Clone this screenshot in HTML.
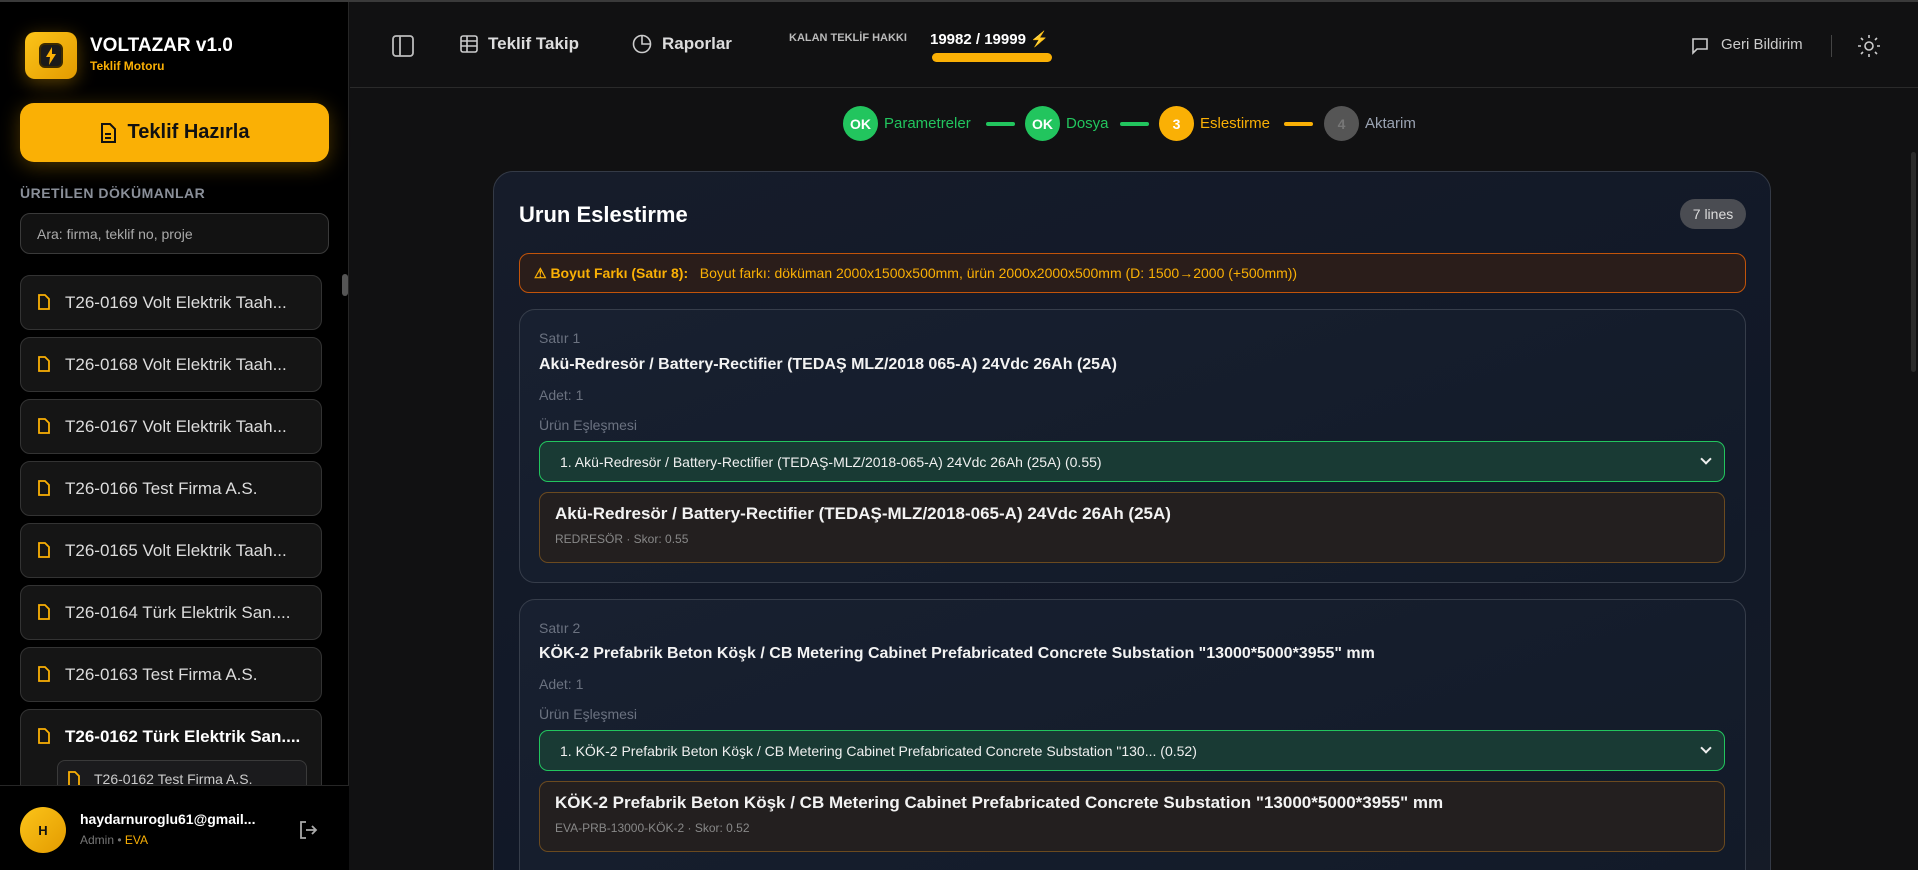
<!DOCTYPE html>
<html><head><meta charset="utf-8"><style>
*{box-sizing:border-box;margin:0;padding:0}
html,body{width:1918px;height:870px;overflow:hidden}
body{background:#111112;font-family:"Liberation Sans",sans-serif;color:#eee}
#w{position:relative;width:1918px;height:870px;overflow:hidden;border-top:2px solid #3a3a3a}
.sb{position:absolute;left:0;top:0;width:349px;height:870px;background:#000;border-right:1px solid #262626}
.logo{position:absolute;left:25px;top:30px;width:52px;height:47px;border-radius:10px;background:linear-gradient(135deg,#fcc419,#e39b00);box-shadow:0 4px 18px rgba(250,176,5,.35)}
.logo i{position:absolute;left:14px;top:11px;width:24px;height:25px;border-radius:6px;background:#1a1a1a;border:2px solid #3b2a00}
.btn{position:absolute;left:20px;top:101px;width:309px;height:59px;border-radius:14px;background:#fab005;box-shadow:0 4px 20px rgba(250,176,5,.3);color:#111;font-weight:bold;font-size:20px;display:flex;align-items:center;justify-content:center;gap:12px}
.lbl{position:absolute;left:20px;top:183px;font-size:14px;font-weight:bold;color:#8a8f99;letter-spacing:.5px}
.search{position:absolute;left:20px;top:211px;width:309px;height:41px;border:1px solid #3a3a3a;border-radius:10px;background:#121212;font-size:14px;color:#aaa;padding:12px 16px}
.it{position:absolute;left:20px;width:302px;height:55px;border:1px solid #333;border-radius:10px;background:#151515;font-size:17px;color:#ddd;padding:17px 0 0 44px;white-space:nowrap;overflow:hidden}
.it svg{position:absolute;left:17px;top:18px}
.user{position:absolute;left:0;top:783px;width:349px;height:87px;background:#000;border-top:1px solid #262626}
.main{position:absolute;left:350px;top:0;right:0;height:86px;border-bottom:1px solid #2a2a2a}
.nav{position:absolute;top:32px;font-size:17px;font-weight:bold;color:#ddd;display:flex;align-items:center;gap:10px}
.step{position:absolute;top:104px;height:35px;display:flex;align-items:center;font-size:15px}
.c{width:35px;height:35px;border-radius:50%;display:flex;align-items:center;justify-content:center;font-weight:bold;font-size:14px;color:#fff;margin-right:6px}
.ln{position:absolute;top:120px;width:29px;height:4px;border-radius:2px}
.card{position:absolute;left:493px;top:169px;width:1278px;height:720px;border:1px solid #343a46;border-radius:20px;background:linear-gradient(160deg,#161c2a,#111827 60%,#151b27)}
.row{position:absolute;left:25px;width:1227px;border:1px solid #363d4a;border-radius:16px;background:linear-gradient(160deg,#182030,#121a28)}
.row .s{position:absolute;left:19px;font-size:14px;color:#6b7280}
.row .t{position:absolute;left:19px;font-size:16px;font-weight:bold;color:#f3f3f3;white-space:nowrap}
.sel{position:absolute;left:19px;width:1186px;height:41px;border:1px solid #22c55e;border-radius:9px;background:#193a34;font-size:14px;color:#f0f0f0;padding:12px 20px}
.sel:after{content:"";position:absolute;right:14px;top:13px;width:6px;height:6px;border-right:2px solid #eee;border-bottom:2px solid #eee;transform:rotate(45deg)}
.pr{position:absolute;left:19px;width:1186px;height:71px;border:1px solid #6b4a1f;border-radius:9px;background:#231f1f;padding:11px 15px}
.pr b{display:block;font-size:17px;color:#f3f3f3}
.pr span{display:block;font-size:12px;color:#888;margin-top:8px}
</style></head><body><div id="w">
<div class="sb">
 <div class="logo"><i></i><svg style="position:absolute;left:20px;top:15px" width="12" height="18" viewBox="0 0 12 18"><path d="M7 0L1 10h4l-1 8 7-11H7z" fill="#fab005"/></svg></div>
 <div style="position:absolute;left:90px;top:33px;font-size:19px;font-weight:bold;color:#fff">VOLTAZAR v1.0</div>
 <div style="position:absolute;left:90px;top:57px;font-size:12px;font-weight:bold;color:#fab005">Teklif Motoru</div>
 <div class="btn"><svg width="16" height="20" viewBox="0 0 16 20" fill="none" stroke="#111" stroke-width="2"><path d="M2 1h8l5 5v13H2z M5 11h6M5 15h6"/></svg>Teklif Hazırla</div>
 <div class="lbl">ÜRETİLEN DÖKÜMANLAR</div>
 <div class="search">Ara: firma, teklif no, proje</div>
 <div style="position:absolute;left:342px;top:272px;width:6px;height:22px;border-radius:3px;background:#555"></div>
 <div class="it" style="top:273px"><svg width="12" height="16" viewBox="0 0 12 16" fill="none" stroke="#fab005" stroke-width="1.8"><path d="M1 1h6l4 4v10H1z"/></svg>T26-0169 Volt Elektrik Taah...</div>
 <div class="it" style="top:335px"><svg width="12" height="16" viewBox="0 0 12 16" fill="none" stroke="#fab005" stroke-width="1.8"><path d="M1 1h6l4 4v10H1z"/></svg>T26-0168 Volt Elektrik Taah...</div>
 <div class="it" style="top:397px"><svg width="12" height="16" viewBox="0 0 12 16" fill="none" stroke="#fab005" stroke-width="1.8"><path d="M1 1h6l4 4v10H1z"/></svg>T26-0167 Volt Elektrik Taah...</div>
 <div class="it" style="top:459px"><svg width="12" height="16" viewBox="0 0 12 16" fill="none" stroke="#fab005" stroke-width="1.8"><path d="M1 1h6l4 4v10H1z"/></svg>T26-0166 Test Firma A.S.</div>
 <div class="it" style="top:521px"><svg width="12" height="16" viewBox="0 0 12 16" fill="none" stroke="#fab005" stroke-width="1.8"><path d="M1 1h6l4 4v10H1z"/></svg>T26-0165 Volt Elektrik Taah...</div>
 <div class="it" style="top:583px"><svg width="12" height="16" viewBox="0 0 12 16" fill="none" stroke="#fab005" stroke-width="1.8"><path d="M1 1h6l4 4v10H1z"/></svg>T26-0164 Türk Elektrik San....</div>
 <div class="it" style="top:645px"><svg width="12" height="16" viewBox="0 0 12 16" fill="none" stroke="#fab005" stroke-width="1.8"><path d="M1 1h6l4 4v10H1z"/></svg>T26-0163 Test Firma A.S.</div>
 <div class="it" style="top:707px;height:100px;font-weight:bold;color:#fff"><svg width="12" height="16" viewBox="0 0 12 16" fill="none" stroke="#fab005" stroke-width="1.8"><path d="M1 1h6l4 4v10H1z"/></svg>T26-0162 Türk Elektrik San....
  <div style="position:absolute;left:36px;top:50px;width:250px;height:40px;border:1px solid #3a3a3a;border-radius:8px;background:#1b1b1d;font-weight:normal;font-size:14px;color:#ccc;padding:10px 0 0 36px"><svg style="left:10px;top:10px" width="12" height="16" viewBox="0 0 12 16" fill="none" stroke="#fab005" stroke-width="1.8"><path d="M1 1h6l4 4v10H1z"/></svg>T26-0162 Test Firma A.S.</div></div>
 <div class="user">
  <div style="position:absolute;left:20px;top:21px;width:46px;height:46px;border-radius:50%;background:linear-gradient(135deg,#fcc419,#e39b00);color:#111;font-size:13px;font-weight:bold;display:flex;align-items:center;justify-content:center">H</div>
  <div style="position:absolute;left:80px;top:25px;font-size:14px;font-weight:bold;color:#fff">haydarnuroglu61@gmail...</div>
  <div style="position:absolute;left:80px;top:47px;font-size:12px;color:#777">Admin • <span style="color:#fab005">EVA</span></div>
  <svg style="position:absolute;left:298px;top:34px" width="20" height="20" viewBox="0 0 20 20" fill="none" stroke="#aaa" stroke-width="1.8"><path d="M8 2H3v16h5M8 10h10M14 6l4 4-4 4"/></svg>
 </div>
</div>
<div class="main">
 <svg style="position:absolute;left:42px;top:33px" width="22" height="22" viewBox="0 0 22 22" fill="none" stroke="#bbb" stroke-width="1.8"><rect x="1" y="1" width="20" height="20" rx="3"/><path d="M8 1v20"/></svg>
 <div class="nav" style="left:110px"><svg width="18" height="18" viewBox="0 0 18 18" fill="none" stroke="#ccc" stroke-width="1.6"><rect x="1" y="1" width="16" height="16" rx="2"/><path d="M1 6h16M1 11h16M7 1v16"/></svg>Teklif Takip</div>
 <div class="nav" style="left:282px"><svg width="20" height="20" viewBox="0 0 20 20" fill="none" stroke="#ccc" stroke-width="1.6"><circle cx="10" cy="10" r="8.5"/><path d="M10 1.5V10h8.5"/></svg>Raporlar</div>
 <div style="position:absolute;left:439px;top:30px;font-size:11px;font-weight:bold;color:#bbb">KALAN TEKLİF HAKKI</div>
 <div style="position:absolute;left:580px;top:28px;font-size:15px;font-weight:bold;color:#fff">19982 / 19999 <span style="color:#fab005">⚡</span></div>
 <div style="position:absolute;left:582px;top:51px;width:120px;height:9px;border-radius:5px;background:#fab005"></div>
 <svg style="position:absolute;left:1341px;top:35px" width="18" height="18" viewBox="0 0 18 18" fill="none" stroke="#ccc" stroke-width="1.6"><path d="M2 2h14v10H6l-4 4z"/></svg>
 <div style="position:absolute;left:1371px;top:34px;font-size:15px;color:#ccc">Geri Bildirim</div>
 <div style="position:absolute;left:1481px;top:33px;width:1px;height:22px;background:#444"></div>
 <svg style="position:absolute;left:1507px;top:32px" width="24" height="24" viewBox="0 0 24 24" fill="none" stroke="#ccc" stroke-width="1.6"><circle cx="12" cy="12" r="4"/><path d="M12 1v3M12 20v3M1 12h3M20 12h3M4 4l2 2M18 18l2 2M4 20l2-2M18 6l2-2"/></svg>
</div>
<div class="step" style="left:843px"><div class="c" style="background:#22c55e">OK</div><span style="color:#22c55e">Parametreler</span></div>
<div class="ln" style="left:986px;background:#22c55e"></div>
<div class="step" style="left:1025px"><div class="c" style="background:#22c55e">OK</div><span style="color:#22c55e">Dosya</span></div>
<div class="ln" style="left:1120px;background:#22c55e"></div>
<div class="step" style="left:1159px"><div class="c" style="background:#fab005">3</div><span style="color:#fab005">Eslestirme</span></div>
<div class="ln" style="left:1284px;background:#fab005"></div>
<div class="step" style="left:1324px"><div class="c" style="background:#555;color:#777">4</div><span style="color:#9aa3b2">Aktarim</span></div>
<div style="position:absolute;right:2px;top:150px;width:5px;height:220px;border-radius:3px;background:#2a2a2a"></div>
<div class="card">
 <div style="position:absolute;left:25px;top:30px;font-size:22px;font-weight:bold;color:#fff">Urun Eslestirme</div>
 <div style="position:absolute;left:1186px;top:27px;width:66px;height:30px;border-radius:15px;background:#4a4c52;font-size:14px;color:#ddd;text-align:center;line-height:30px">7 lines</div>
 <div style="position:absolute;left:25px;top:81px;width:1227px;height:40px;border:1px solid #c2540a;border-radius:10px;background:#2a1d1a;font-size:14px;color:#fab005;padding:11px 14px"><b>⚠ Boyut Farkı (Satır 8):</b>&nbsp;&nbsp; Boyut farkı: döküman 2000x1500x500mm, ürün 2000x2000x500mm (D: 1500→2000 (+500mm))</div>
 <div class="row" style="top:137px;height:274px">
  <div class="s" style="top:20px">Satır 1</div>
  <div class="t" style="top:46px">Akü-Redresör / Battery-Rectifier (TEDAŞ MLZ/2018 065-A) 24Vdc 26Ah (25A)</div>
  <div class="s" style="top:77px">Adet: 1</div>
  <div class="s" style="top:107px">Ürün Eşleşmesi</div>
  <div class="sel" style="top:131px">1. Akü-Redresör / Battery-Rectifier (TEDAŞ-MLZ/2018-065-A) 24Vdc 26Ah (25A) (0.55)</div>
  <div class="pr" style="top:182px"><b>Akü-Redresör / Battery-Rectifier (TEDAŞ-MLZ/2018-065-A) 24Vdc 26Ah (25A)</b><span>REDRESÖR · Skor: 0.55</span></div>
 </div>
 <div class="row" style="top:427px;height:300px">
  <div class="s" style="top:20px">Satır 2</div>
  <div class="t" style="top:45px">KÖK-2 Prefabrik Beton Köşk / CB Metering Cabinet Prefabricated Concrete Substation "13000*5000*3955" mm</div>
  <div class="s" style="top:76px">Adet: 1</div>
  <div class="s" style="top:106px">Ürün Eşleşmesi</div>
  <div class="sel" style="top:130px">1. KÖK-2 Prefabrik Beton Köşk / CB Metering Cabinet Prefabricated Concrete Substation "130... (0.52)</div>
  <div class="pr" style="top:181px"><b>KÖK-2 Prefabrik Beton Köşk / CB Metering Cabinet Prefabricated Concrete Substation "13000*5000*3955" mm</b><span>EVA-PRB-13000-KÖK-2 · Skor: 0.52</span></div>
 </div>
</div>
</div></body></html>
